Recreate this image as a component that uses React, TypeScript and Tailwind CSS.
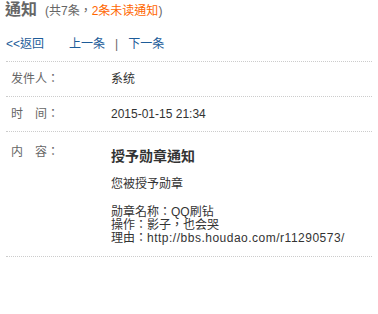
export default function App() {
  const font = { fontFamily: '"Liberation Sans", "Noto Sans CJK TC", "Noto Sans CJK SC", sans-serif' };
  return (
    <div className="w-[378px] h-[314px] bg-white text-[12px] text-[#333]" style={font}>
      {/* heading */}
      <div className="flex items-baseline pl-[5px] pt-0 h-[20px]">
        <span className="text-[16px] font-bold text-[#666] leading-[20px]">通知</span>
        <span className="ml-[8px] text-[#666]">
          (共7条，<span className="text-[#ff6600]">2条未读通知</span>)
        </span>
      </div>

      {/* nav links */}
      <div className="flex items-center h-[16px] mt-[16px] pl-[6px] text-[#1d5c99]">
        <a className="cursor-pointer">&lt;&lt;返回</a>
        <a className="ml-[25px] cursor-pointer">上一条</a>
        <span className="mx-[10px] text-[#666]">|</span>
        <a className="cursor-pointer">下一条</a>
      </div>

      {/* detail table */}
      <div className="mx-[6px] mt-[9px] border-t border-dotted border-[#ccc]">
        <div className="flex items-center h-[35px] border-b border-dotted border-[#ccc]">
          <div className="w-[105px] pl-[5px] text-[#666]">发件人：</div>
          <div>系统</div>
        </div>
        <div className="flex items-center h-[35px] border-b border-dotted border-[#ccc]">
          <div className="w-[105px] pl-[5px] text-[#666]">时　间：</div>
          <div>2015-01-15 21:34</div>
        </div>
        <div className="flex border-b border-dotted border-[#ccc] pt-[13px] pb-[11px]">
          <div className="w-[105px] pl-[5px] text-[#666] leading-[14px]">内　容：</div>
          <div className="leading-[13px]">
            <div className="text-[14px] font-bold leading-[16px] mt-[3px]">授予勋章通知</div>
            <div className="mt-[14px]">您被授予勋章</div>
            <div className="mt-[15px]">勋章名称：QQ刷钻</div>
            <div>操作：影子，也会哭</div>
            <div>
              理由：<span className="tracking-[0.5px]">http://bbs.houdao.com/r11290573/</span>
            </div>
          </div>
        </div>
      </div>
    </div>
  );
}
